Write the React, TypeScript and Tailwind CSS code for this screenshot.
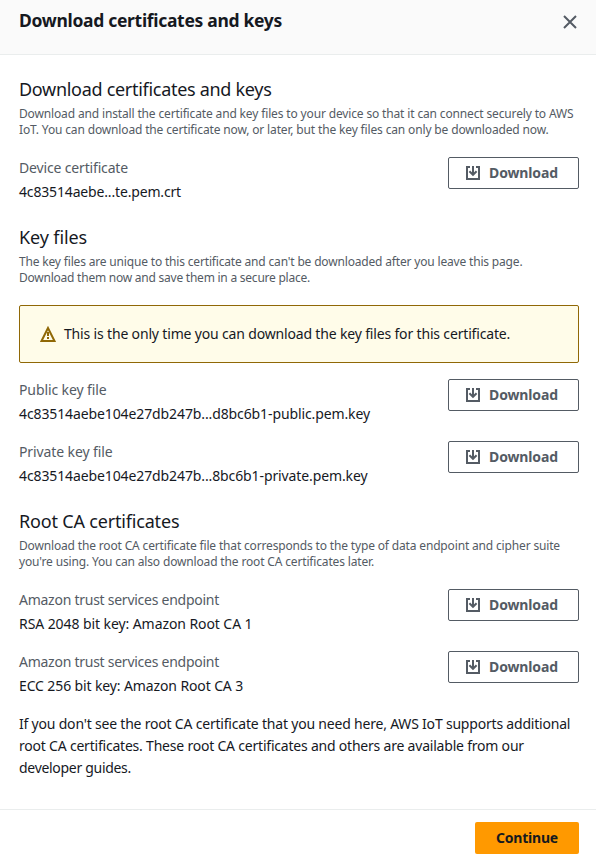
import type { ReactNode } from "react";

function Line({ className = "", children }: { className?: string; children: ReactNode }) {
  return <span className={`block whitespace-nowrap ${className}`}>{children}</span>;
}

function Heading({ className, children }: { className: string; children: ReactNode }) {
  return (
    <h2 className={`h-[22px] whitespace-nowrap text-[18px] leading-[22px] text-[#16191f] ${className}`}>
      {children}
    </h2>
  );
}

function Description({ children }: { children: ReactNode }) {
  return <p className="mt-[6px] text-xs leading-4 text-[#545b64]">{children}</p>;
}

function DownloadIcon() {
  return (
    <svg className="size-4 shrink-0" viewBox="0 0 16 16" fill="none" stroke="currentColor" strokeWidth="2">
      <path d="M5 2H2v12h12V2h-3" />
      <path d="M8 1v8.5" />
      <path d="M4.4 6.2 8 9.8l3.6-3.6" />
    </svg>
  );
}

function FileRow({ label, value, labelClass, valueClass }: {
  label: string;
  value: string;
  labelClass: string;
  valueClass: string;
}) {
  return (
    <div className="flex h-[46px] items-start justify-between text-sm leading-[22px]">
      <div className="flex flex-col gap-0.5">
        <Line className={`text-[#545b64] ${labelClass}`}>{label}</Line>
        <Line className={valueClass}>{value}</Line>
      </div>
      <button className="flex h-8 w-[131px] items-center gap-2 rounded-[2px] border border-[#545b64] bg-white pl-4 font-bold tracking-[-0.12px] text-[#545b64]">
        <DownloadIcon />
        Download
      </button>
    </div>
  );
}

export default function App() {
  return (
    <div className="flex h-[863px] w-[596px] flex-col bg-white font-['Noto_Sans',sans-serif] text-sm leading-[22px] text-[#16191f]">
      <header className="flex h-[55px] shrink-0 items-start justify-between border-b border-[#eaeded] bg-[#fafafa] pr-[18px] pl-[19px]">
        <h1 className="mt-[9px] whitespace-nowrap text-[17.5px] leading-[22px] font-bold tracking-[-0.307px]">
          Download certificates and keys
        </h1>
        <button aria-label="Close" className="mt-[14px] text-[#545b64]">
          <svg className="size-4" viewBox="0 0 16 16" fill="none" stroke="currentColor" strokeWidth="2">
            <path d="m2 2 12 12M14 2 2 14" />
          </svg>
        </button>
      </header>

      <main className="flex grow flex-col pt-[23px] pr-[17px] pl-[19px]">
        <Heading className="tracking-[-0.296px]">Download certificates and keys</Heading>
        <Description>
          <Line className="tracking-[-0.147px]">
            Download and install the certificate and key files to your device so that it can connect securely to AWS
          </Line>
          <Line className="tracking-[-0.15px]">
            IoT. You can download the certificate now, or later, but the key files can only be downloaded now.
          </Line>
        </Description>
        <div className="mt-[19px]">
          <FileRow
            label="Device certificate"
            value="4c83514aebe...te.pem.crt"
            labelClass="tracking-[-0.157px]"
            valueClass="tracking-[-0.162px]"
          />
        </div>

        <Heading className="mt-[23px] tracking-[-0.116px]">Key files</Heading>
        <Description>
          <Line className="tracking-[-0.173px]">
            The key files are unique to this certificate and can't be downloaded after you leave this page.
          </Line>
          <Line className="tracking-[-0.235px]">Download them now and save them in a secure place.</Line>
        </Description>
        <div className="mt-[19px] flex h-[58px] items-center gap-2 rounded-[2px] border border-[#906806] bg-[#fffce9] pl-5">
          <svg className="size-4 shrink-0 text-[#906806]" viewBox="0 0 16 16" fill="none" stroke="currentColor" strokeWidth="2">
            <path d="M8 2 1.5 15h13z" />
            <path d="M8 6v4M8 11v2" />
          </svg>
          <Line className="tracking-[-0.165px]">
            This is the only time you can download the key files for this certificate.
          </Line>
        </div>
        <div className="mt-4 flex flex-col gap-4">
          <FileRow
            label="Public key file"
            value="4c83514aebe104e27db247b...d8bc6b1-public.pem.key"
            labelClass="tracking-[-0.1px]"
            valueClass="tracking-[-0.11px]"
          />
          <FileRow
            label="Private key file"
            value="4c83514aebe104e27db247b...8bc6b1-private.pem.key"
            labelClass="tracking-[-0.1px]"
            valueClass="tracking-[-0.11px]"
          />
        </div>

        <Heading className="mt-[23px] tracking-[-0.18px]">Root CA certificates</Heading>
        <Description>
          <Line className="tracking-[-0.16px]">
            Download the root CA certificate file that corresponds to the type of data endpoint and cipher suite
          </Line>
          <Line className="tracking-[-0.155px]">
            you're using. You can also download the root CA certificates later.
          </Line>
        </Description>
        <div className="mt-[19px] flex flex-col gap-4">
          <FileRow
            label="Amazon trust services endpoint"
            value="RSA 2048 bit key: Amazon Root CA 1"
            labelClass="tracking-[-0.258px]"
            valueClass="tracking-[-0.08px]"
          />
          <FileRow
            label="Amazon trust services endpoint"
            value="ECC 256 bit key: Amazon Root CA 3"
            labelClass="tracking-[-0.258px]"
            valueClass="tracking-[-0.12px]"
          />
        </div>
        <p className="mt-4">
          <Line className="tracking-[-0.2px]">
            If you don't see the root CA certificate that you need here, AWS IoT supports additional
          </Line>
          <Line className="tracking-[-0.21px]">
            root CA certificates. These root CA certificates and others are available from our
          </Line>
          <Line className="tracking-[-0.3px]">developer guides.</Line>
        </p>
      </main>

      <footer className="flex h-[54px] shrink-0 items-start justify-end border-t border-[#eaeded] pt-3 pr-[17px]">
        <button className="flex h-8 w-[104px] items-center justify-center rounded-[2px] bg-[#ff9900] font-bold tracking-[-0.2px]">
          Continue
        </button>
      </footer>
    </div>
  );
}
